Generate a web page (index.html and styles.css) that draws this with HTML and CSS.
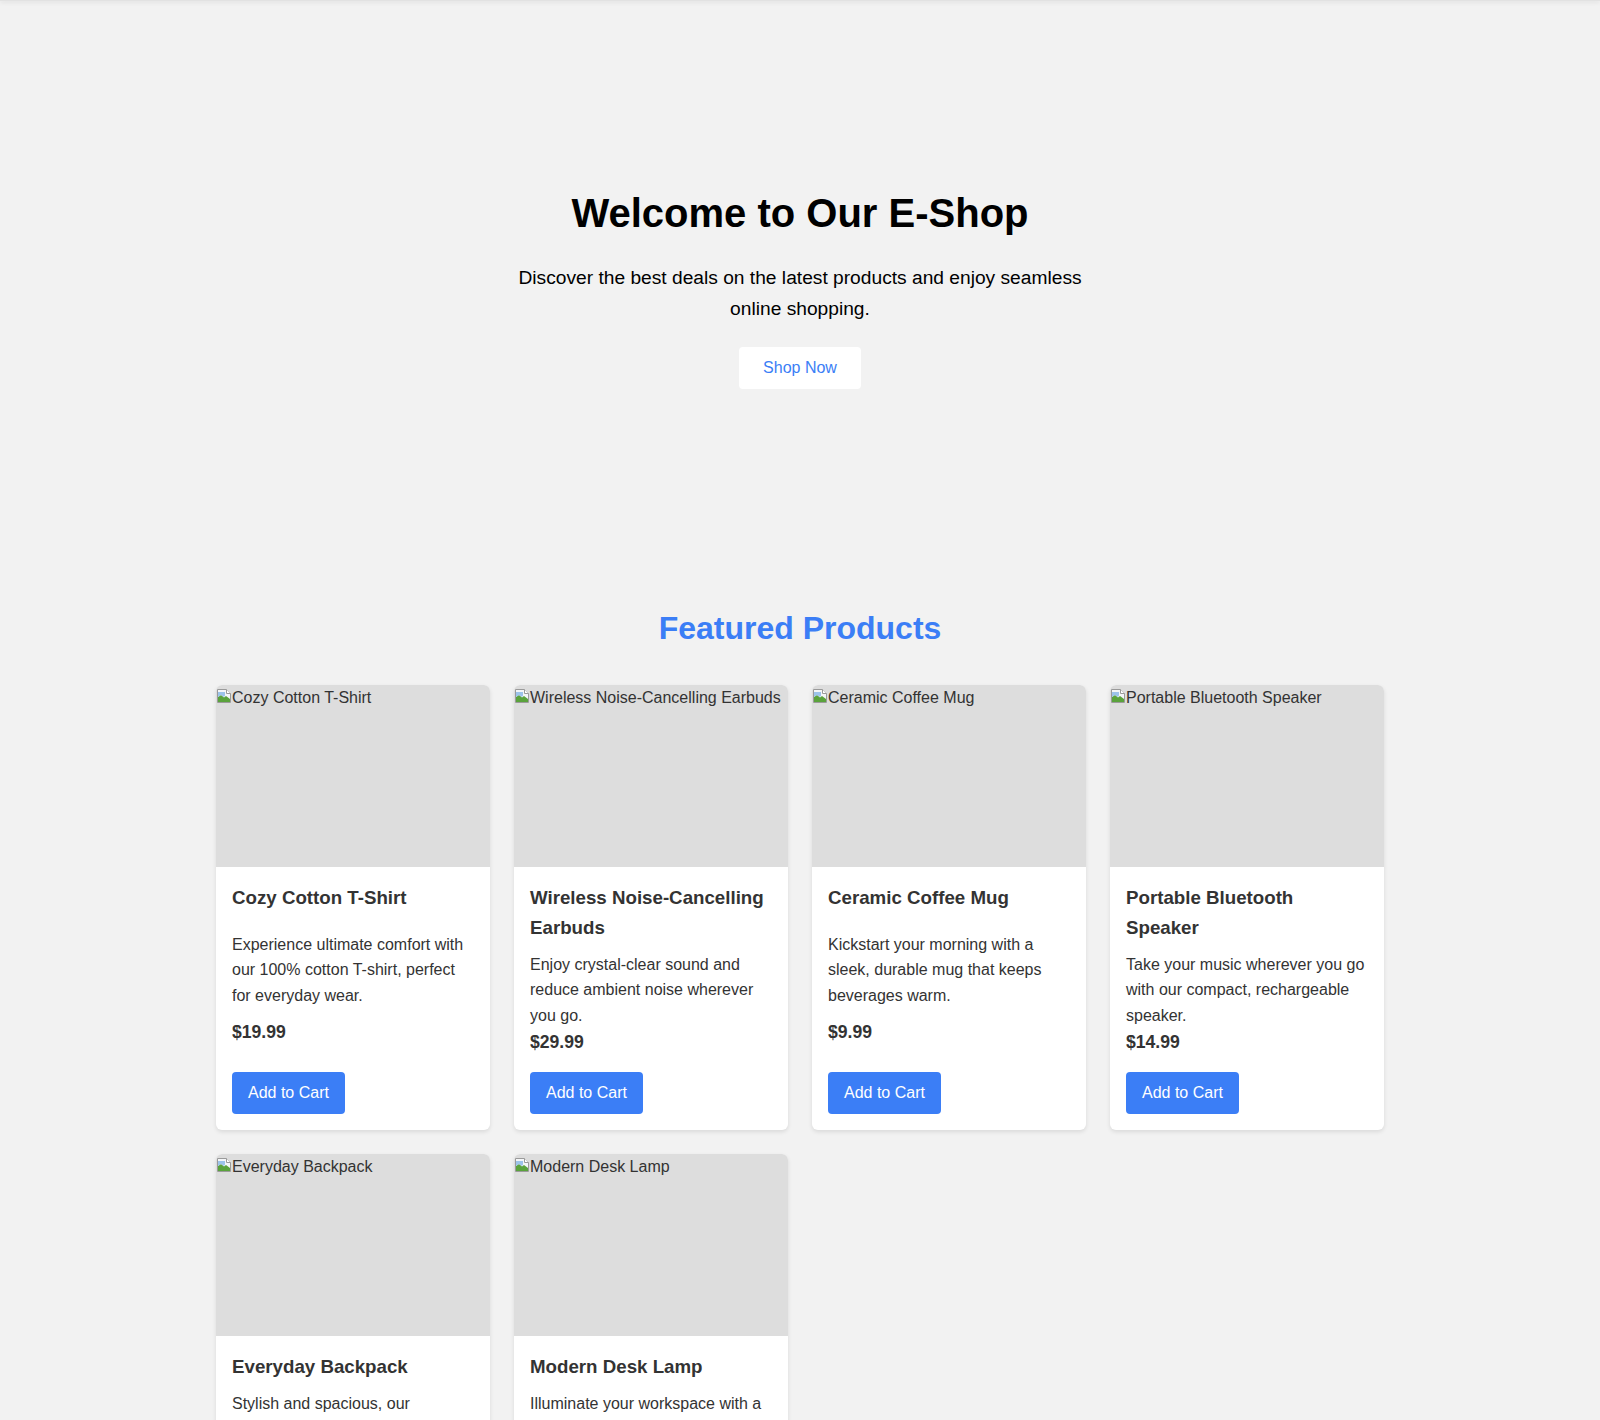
FILE: index.html
```html
<!DOCTYPE html>
<html lang="en">
<head>
<meta charset="utf-8">
<title>E-Shop</title>
<link rel="stylesheet" href="styles.css">
</head>
<body>
<header class="topbar"></header>

<section class="hero">
  <h1 class="hero-title">Welcome to Our E-Shop</h1>
  <p class="hero-text">Discover the best deals on the latest products and enjoy seamless online shopping.</p>
  <button class="hero-btn">Shop Now</button>
</section>

<section class="products">
  <h2 class="products-title">Featured Products</h2>
  <div class="grid">
    <article class="card">
      <div class="thumb"><svg class="broken" viewBox="0 0 16 16" width="16" height="16"><path d="M1.5 1.5h9l4 4v9h-13z" fill="#f4f6f8" stroke="#9a9a9a"/><path d="M10.5 1.5v4h4" fill="#fff" stroke="#9a9a9a"/><path d="M2 9l3-2 3 2.5 2-1.5 4 3v3H2z" fill="#5aa33c"/><path d="M2 4h7v3.5l-1 1.5-3-2-3 2z" fill="#9cc3ea"/></svg><span>Cozy Cotton T-Shirt</span></div>
      <div class="body">
        <h3 class="name">Cozy Cotton T-Shirt</h3>
        <p class="desc">Experience ultimate comfort with our 100% cotton T-shirt, perfect for everyday wear.</p>
        <p class="price">$19.99</p>
        <button class="cart-btn">Add to Cart</button>
      </div>
    </article>
    <article class="card">
      <div class="thumb"><svg class="broken" viewBox="0 0 16 16" width="16" height="16"><path d="M1.5 1.5h9l4 4v9h-13z" fill="#f4f6f8" stroke="#9a9a9a"/><path d="M10.5 1.5v4h4" fill="#fff" stroke="#9a9a9a"/><path d="M2 9l3-2 3 2.5 2-1.5 4 3v3H2z" fill="#5aa33c"/><path d="M2 4h7v3.5l-1 1.5-3-2-3 2z" fill="#9cc3ea"/></svg><span>Wireless Noise-Cancelling Earbuds</span></div>
      <div class="body">
        <h3 class="name">Wireless Noise-Cancelling Earbuds</h3>
        <p class="desc">Enjoy crystal-clear sound and reduce ambient noise wherever you go.</p>
        <p class="price">$29.99</p>
        <button class="cart-btn">Add to Cart</button>
      </div>
    </article>
    <article class="card">
      <div class="thumb"><svg class="broken" viewBox="0 0 16 16" width="16" height="16"><path d="M1.5 1.5h9l4 4v9h-13z" fill="#f4f6f8" stroke="#9a9a9a"/><path d="M10.5 1.5v4h4" fill="#fff" stroke="#9a9a9a"/><path d="M2 9l3-2 3 2.5 2-1.5 4 3v3H2z" fill="#5aa33c"/><path d="M2 4h7v3.5l-1 1.5-3-2-3 2z" fill="#9cc3ea"/></svg><span>Ceramic Coffee Mug</span></div>
      <div class="body">
        <h3 class="name">Ceramic Coffee Mug</h3>
        <p class="desc">Kickstart your morning with a sleek, durable mug that keeps beverages warm.</p>
        <p class="price">$9.99</p>
        <button class="cart-btn">Add to Cart</button>
      </div>
    </article>
    <article class="card">
      <div class="thumb"><svg class="broken" viewBox="0 0 16 16" width="16" height="16"><path d="M1.5 1.5h9l4 4v9h-13z" fill="#f4f6f8" stroke="#9a9a9a"/><path d="M10.5 1.5v4h4" fill="#fff" stroke="#9a9a9a"/><path d="M2 9l3-2 3 2.5 2-1.5 4 3v3H2z" fill="#5aa33c"/><path d="M2 4h7v3.5l-1 1.5-3-2-3 2z" fill="#9cc3ea"/></svg><span>Portable Bluetooth Speaker</span></div>
      <div class="body">
        <h3 class="name">Portable Bluetooth Speaker</h3>
        <p class="desc">Take your music wherever you go with our compact, rechargeable speaker.</p>
        <p class="price">$14.99</p>
        <button class="cart-btn">Add to Cart</button>
      </div>
    </article>
    <article class="card">
      <div class="thumb"><svg class="broken" viewBox="0 0 16 16" width="16" height="16"><path d="M1.5 1.5h9l4 4v9h-13z" fill="#f4f6f8" stroke="#9a9a9a"/><path d="M10.5 1.5v4h4" fill="#fff" stroke="#9a9a9a"/><path d="M2 9l3-2 3 2.5 2-1.5 4 3v3H2z" fill="#5aa33c"/><path d="M2 4h7v3.5l-1 1.5-3-2-3 2z" fill="#9cc3ea"/></svg><span>Everyday Backpack</span></div>
      <div class="body">
        <h3 class="name">Everyday Backpack</h3>
        <p class="desc">Stylish and spacious, our backpack is perfect for work, school, or travel.</p>
        <p class="price">$49.99</p>
        <button class="cart-btn">Add to Cart</button>
      </div>
    </article>
    <article class="card">
      <div class="thumb"><svg class="broken" viewBox="0 0 16 16" width="16" height="16"><path d="M1.5 1.5h9l4 4v9h-13z" fill="#f4f6f8" stroke="#9a9a9a"/><path d="M10.5 1.5v4h4" fill="#fff" stroke="#9a9a9a"/><path d="M2 9l3-2 3 2.5 2-1.5 4 3v3H2z" fill="#5aa33c"/><path d="M2 4h7v3.5l-1 1.5-3-2-3 2z" fill="#9cc3ea"/></svg><span>Modern Desk Lamp</span></div>
      <div class="body">
        <h3 class="name">Modern Desk Lamp</h3>
        <p class="desc">Illuminate your workspace with a sleek, adjustable lamp with warm LED light.</p>
        <p class="price">$34.99</p>
        <button class="cart-btn">Add to Cart</button>
      </div>
    </article>
  </div>
</section>
</body>
</html>
```

FILE: styles.css
```css
* { box-sizing: border-box; }

body {
  margin: 0;
  background: #f2f2f2;
  color: #333;
  font-family: "Liberation Sans", Arial, sans-serif;
  font-size: 16px;
  line-height: 1.6;
}

.topbar {
  height: 1px;
  background: #e2e2e2;
  box-shadow: 0 1px 4px rgba(0, 0, 0, 0.2);
}

.hero {
  padding: 188px 20px 180px;
  text-align: center;
  color: #000;
}

.hero-title {
  margin: 0 0 26px;
  font-size: 40px;
  line-height: 48px;
  font-weight: 700;
}

.hero-text {
  max-width: 600px;
  margin: 0 auto 23px;
  font-size: 19.2px;
  line-height: 1.6;
}

.hero-btn {
  background: #fff;
  color: #3b7ef6;
  border: none;
  border-radius: 4px;
  padding: 12px 24px;
  font-family: inherit;
  font-size: 16px;
  line-height: normal;
  cursor: pointer;
}

.products {
  max-width: 1200px;
  margin: 0 auto;
  padding: 34px 16px 32px;
}

.products-title {
  margin: 0 0 30px;
  text-align: center;
  color: #3b7ef6;
  font-size: 32px;
  line-height: 1.6;
}

.grid {
  display: grid;
  grid-template-columns: repeat(4, 1fr);
  gap: 24px;
}

.card {
  background: #fff;
  border-radius: 6px;
  box-shadow: 0 2px 4px rgba(0, 0, 0, 0.1);
  overflow: hidden;
  display: flex;
  flex-direction: column;
}

.thumb {
  height: 182px;
  background: #ddd;
  color: #333;
  display: flex;
  align-items: flex-start;
  white-space: nowrap;
  overflow: hidden;
}

.broken {
  flex: none;
  margin-top: 3px;
}

.body {
  flex: 1;
  padding: 16px;
  display: flex;
  flex-direction: column;
  justify-content: space-between;
  align-items: flex-start;
}

.name {
  margin: 0 0 9px;
  font-size: 18.72px;
  line-height: 1.6;
}

.desc {
  margin: 0;
}

.price {
  margin: 0;
  font-size: 17.6px;
  font-weight: 700;
}

.cart-btn {
  margin-top: 16px;
  background: #3b7ef6;
  color: #fff;
  border: none;
  border-radius: 4px;
  padding: 12px 16px;
  font-family: inherit;
  font-size: 16px;
  line-height: normal;
  cursor: pointer;
}
```
